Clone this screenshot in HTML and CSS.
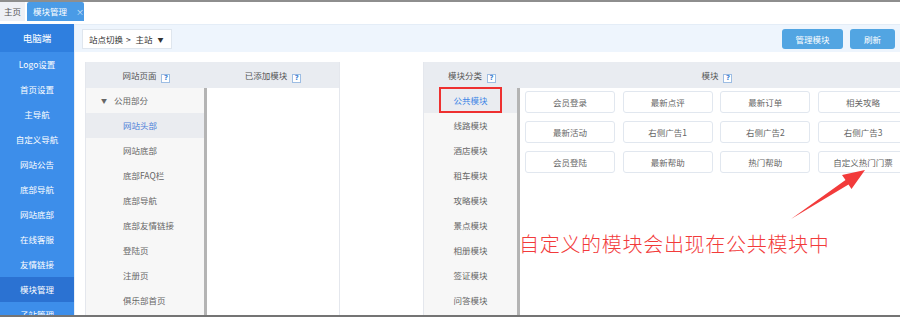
FILE: index.html
```html
<!DOCTYPE html>
<html lang="zh-CN">
<head>
    <meta charset="UTF-8">
    <title>模块管理</title>
    <link rel="stylesheet" href="styles.css">
</head>
<body>
    <div class="screen">
        <div class="tabs">
            <div class="tab">主页</div>
            <div class="tab active">模块管理<span class="close">×</span></div>
        </div>

        <div class="main">
            <aside class="sidebar">
                <div class="side-head">电脑端</div>
                <div class="side-item">Logo设置</div>
                <div class="side-item">首页设置</div>
                <div class="side-item">主导航</div>
                <div class="side-item">自定义导航</div>
                <div class="side-item">网站公告</div>
                <div class="side-item">底部导航</div>
                <div class="side-item">网站底部</div>
                <div class="side-item">在线客服</div>
                <div class="side-item">友情链接</div>
                <div class="side-item current">模块管理</div>
                <div class="side-item">子站管理</div>
            </aside>

            <section class="content">
                <div class="toolbar">
                    <div class="site-switch">站点切换 <span class="gt">&gt;</span> 主站 <span class="caret">▼</span></div>
                    <div class="actions">
                        <button class="btn">管理模块</button>
                        <button class="btn btn-small">刷新</button>
                    </div>
                </div>

                <div class="panels">
                    <div class="group">
                        <div class="col col-pages">
                            <div class="col-head">网站页面 <span class="help">?</span></div>
                            <div class="col-body list">
                                <div class="row row-folder"><span class="tri">▼</span>公用部分</div>
                                <div class="row sub selected">网站头部</div>
                                <div class="row sub">网站底部</div>
                                <div class="row sub">底部FAQ栏</div>
                                <div class="row sub">底部导航</div>
                                <div class="row sub">底部友情链接</div>
                                <div class="row sub">登陆页</div>
                                <div class="row sub">注册页</div>
                                <div class="row sub">俱乐部首页</div>
                            </div>
                        </div>
                        <div class="col col-added">
                            <div class="col-head">已添加模块 <span class="help">?</span></div>
                            <div class="col-body"></div>
                        </div>
                    </div>

                    <div class="group group-right">
                        <div class="col col-cats">
                            <div class="col-head">模块分类 <span class="help">?</span></div>
                            <div class="col-body list">
                                <div class="row center selected"><span class="marked">公共模块</span></div>
                                <div class="row center">线路模块</div>
                                <div class="row center">酒店模块</div>
                                <div class="row center">租车模块</div>
                                <div class="row center">攻略模块</div>
                                <div class="row center">景点模块</div>
                                <div class="row center">相册模块</div>
                                <div class="row center">签证模块</div>
                                <div class="row center">问答模块</div>
                            </div>
                        </div>
                        <div class="col col-modules">
                            <div class="col-head">模块 <span class="help">?</span></div>
                            <div class="col-body module-grid">
                                <div class="mod">会员登录</div>
                                <div class="mod">最新点评</div>
                                <div class="mod">最新订单</div>
                                <div class="mod">相关攻略</div>
                                <div class="mod">最新活动</div>
                                <div class="mod">右侧广告1</div>
                                <div class="mod">右侧广告2</div>
                                <div class="mod">右侧广告3</div>
                                <div class="mod">会员登陆</div>
                                <div class="mod">最新帮助</div>
                                <div class="mod">热门帮助</div>
                                <div class="mod">自定义热门门票</div>
                            </div>
                        </div>
                    </div>
                </div>
            </section>
        </div>

        <!-- annotation layer -->
        <div class="note">自定义的模块会出现在公共模块中</div>
        <svg class="arrow" width="900" height="317" viewBox="0 0 900 317">
            <polygon points="865,170 842,175 845.5,180 791,219 848.5,184.5 851.5,189" fill="#f23b3b"/>
        </svg>
    </div>
</body>
</html>
```

FILE: styles.css
```css
* {
    margin: 0;
    padding: 0;
    box-sizing: border-box;
}

body {
    font-family: "Noto Sans CJK SC", "Noto Sans", sans-serif;
    font-size: 8.5px;
    color: #555;
    background: #fff;
    overflow: hidden;
}

.screen {
    position: relative;
    width: 900px;
    height: 317px;
    border-top: 2px solid #8e8e8e;
    border-bottom: 2px solid #747474;
    overflow: hidden;
}

/* tabs */
.tabs {
    display: flex;
    height: 22px;
}

.tab {
    width: 25px;
    height: 19px;
    line-height: 19px;
    text-align: center;
    background: #eef0f5;
    color: #555;
    white-space: nowrap;
}

.tab.active {
    width: 57px;
    margin-left: 2px;
    padding-left: 6px;
    text-align: left;
    background: #4a9be6;
    color: #fff;
    border-radius: 2px 2px 0 0;
}

.tab .close {
    margin-left: 9px;
    color: #d6e8fa;
    font-size: 8px;
}

/* layout */
.main {
    display: flex;
    height: 291px;
}

.sidebar {
    width: 75px;
    flex-shrink: 0;
    background: #3d8eea;
    color: #fff;
    border-right: 1px solid #e8eef6;
}

.side-head {
    height: 28px;
    line-height: 28px;
    text-align: center;
    background: #2f7fdf;
    font-size: 9.5px;
}

.side-item {
    height: 25px;
    line-height: 25px;
    text-align: center;
}

.side-item.current {
    background: #2b72d2;
}

.content {
    flex: 1;
    min-width: 0;
}

/* toolbar */
.toolbar {
    display: flex;
    justify-content: space-between;
    align-items: center;
    height: 28px;
    padding: 0 5px 0 7px;
    background: #eef5fd;
    border-top: 1px solid #e4edf7;
}

.site-switch {
    width: 90px;
    height: 20px;
    line-height: 18px;
    padding-left: 6px;
    background: #fff;
    border: 1px solid #dfe6ee;
    color: #333;
    white-space: nowrap;
}

.site-switch .gt {
    margin: 0 3px 0 1px;
}

.site-switch .caret {
    margin-left: 3px;
    font-size: 6px;
    vertical-align: 1px;
}

.actions {
    display: flex;
    gap: 7px;
}

.btn {
    width: 61px;
    height: 20px;
    border: none;
    border-radius: 3px;
    background: #52a5e2;
    color: #fff;
    font-family: inherit;
    font-size: 8.5px;
}

.btn-small {
    width: 45px;
}

/* panels */
.panels {
    display: flex;
    padding: 10px 0 0 10px;
}

.group {
    display: flex;
    flex-shrink: 0;
}

.group-right {
    margin-left: 83px;
}

.col {
    display: flex;
    flex-direction: column;
    height: 260px;
    flex-shrink: 0;
}

.col-head {
    height: 26px;
    line-height: 26px;
    text-align: center;
    background: #e9ecf1;
    color: #555;
}

.col-body {
    flex: 1;
}

.list {
    background: #f7f7f7;
    border-right: 3px solid #b4b4b4;
}

.col-pages {
    width: 122px;
    border-left: 1px solid #e4e7ed;
}

.col-added {
    width: 133px;
    border-right: 1px solid #e4e7ed;
}

.col-cats {
    width: 97px;
    border-left: 1px solid #e4e7ed;
}

.col-modules {
    width: 394px;
}

.help {
    display: inline-block;
    width: 9px;
    height: 9px;
    margin-left: 3px;
    line-height: 7px;
    text-align: center;
    border: 1px solid #9dbde3;
    background: #fff;
    color: #3f7fd0;
    font-size: 7px;
    font-weight: bold;
    font-family: "DejaVu Sans", sans-serif;
    vertical-align: -1px;
}

.row {
    height: 25px;
    line-height: 25px;
    color: #666;
}

.row-folder {
    padding-left: 15px;
}

.row-folder .tri {
    margin-right: 7px;
    font-size: 6px;
    vertical-align: 1px;
}

.row.sub {
    padding-left: 37px;
}

.row.selected {
    background: #eaecf0;
}

.col-pages .row.selected {
    color: #4d7fd8;
}

.row.center {
    text-align: center;
}

.marked {
    display: inline-block;
    width: 63px;
    height: 26px;
    line-height: 22px;
    margin-top: -1px;
    border: 2px solid #ee3030;
    color: #3f86e6;
    vertical-align: top;
}

/* module buttons */
.module-grid {
    display: grid;
    grid-template-columns: repeat(4, 90px);
    grid-auto-rows: 22px;
    column-gap: 7.7px;
    row-gap: 8px;
    align-content: start;
    padding: 3px 0 0 5px;
}

.mod {
    line-height: 20px;
    text-align: center;
    background: #fff;
    border: 1px solid #e1e7ef;
    border-radius: 3px;
    color: #666;
}

/* annotation */
.note {
    position: absolute;
    left: 519px;
    top: 227px;
    color: #f23b3b;
    font-size: 20px;
    letter-spacing: 0.7px;
    font-weight: 300;
}

.arrow {
    position: absolute;
    left: 0;
    top: -2px;
    pointer-events: none;
}
```
